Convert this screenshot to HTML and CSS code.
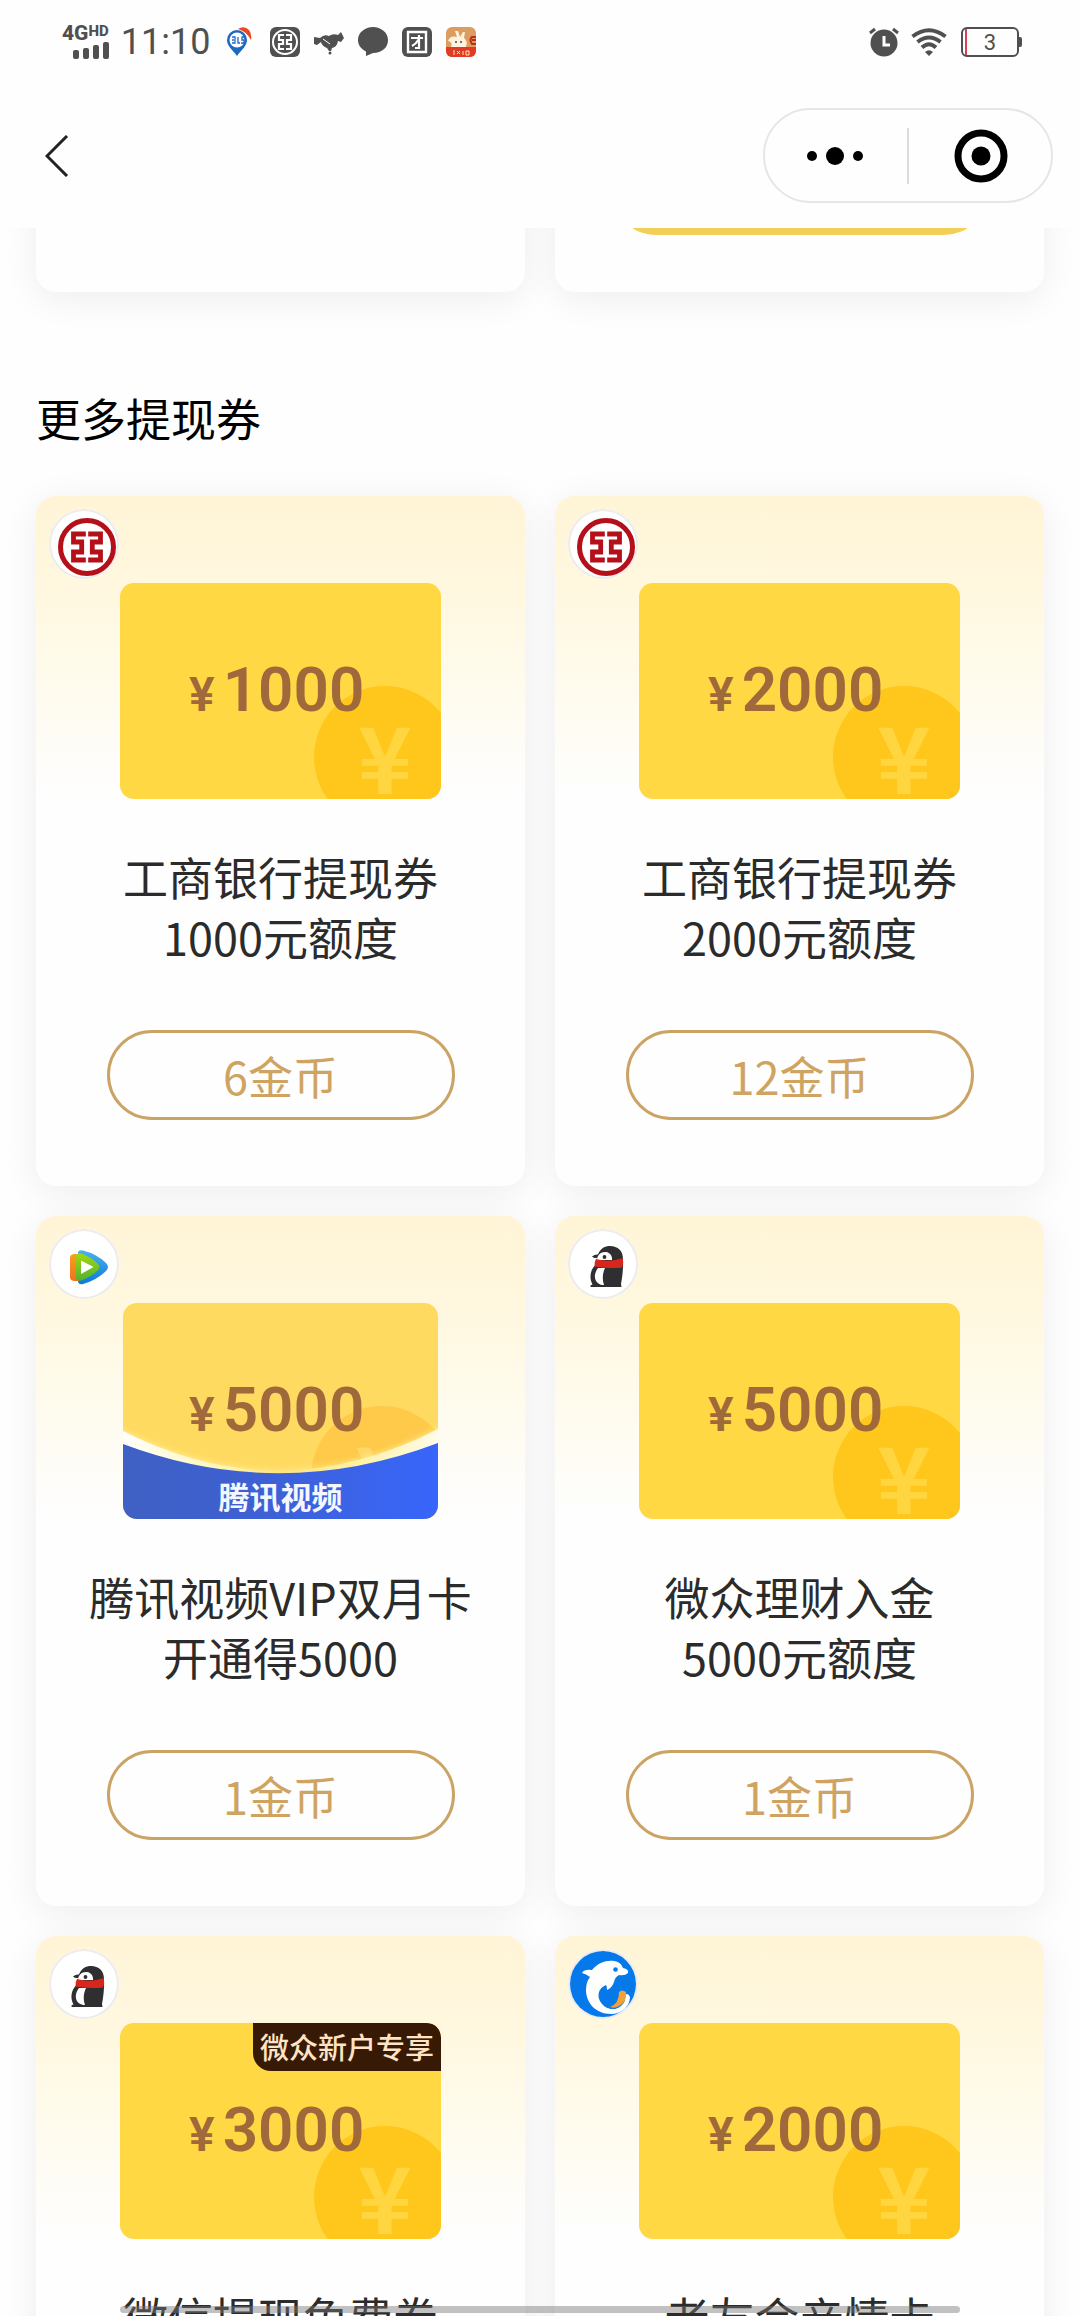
FILE: index.html
```html
<!DOCTYPE html>
<html lang="zh-CN">
<head>
    <meta charset="UTF-8">
    <meta name="viewport" content="width=device-width, initial-scale=1">
    <title>更多提现券</title>
    <link rel="stylesheet" href="styles.css">
</head>
<body>
    <svg class="sprite" aria-hidden="true">
        <symbol id="icbc" viewBox="0 0 70 70">
            <circle cx="38" cy="38" r="26.500" fill="none" stroke="#b5101a" stroke-width="5"/>
            <path d="M36.800 25H24.500V33h8.200v10h-8.200v8h12.300M39.200 25h12.300V33h-8.200v10h8.200v8H39.200" fill="none" stroke="#b5101a" stroke-width="4.800"/>
        </symbol>
        <symbol id="penguin" viewBox="0 0 70 70">
            <path d="M24 27.500Q27 25 30 25.500C32 19.500 37 17 42 17C50 17 55 22 55 30C55.500 40 54 50 53 55L53.500 58H23Q21 56.500 24.500 55.500C21 49 22 41 27.500 36L29 29Q26 29.500 24 27.500Z" fill="#2f2f31"/>
            <path d="M29 31C29 26 33 22.500 38 23C42 23.500 44.500 27 44 31Z" fill="#fff"/>
            <circle cx="36.500" cy="28" r="1.900" fill="#2f2f31"/>
            <path d="M28 30Q42 34 54.500 29Q56 34 54 38.500Q42 40 26.500 37.500Q26 33 28 30Z" fill="#d8261c"/>
            <path d="M30 39H37C34.500 44 34 50 36 56C27 56 24 47 30 39Z" fill="#fff"/>
        </symbol>
    </svg>

    <header class="header">
        <div class="statusbar">
            <div class="status-group">
                <div class="signal">
                    <span class="network">4G<small>HD</small></span>
                    <svg class="bars" viewBox="0 0 36 17">
                        <rect x="0" y="8" width="6" height="9" rx="2"/>
                        <rect x="10" y="6" width="6" height="11" rx="2"/>
                        <rect x="20" y="3" width="6" height="14" rx="2"/>
                        <rect x="30" y="0" width="6" height="17" rx="2"/>
                    </svg>
                </div>
                <time class="clock">11:10</time>
                <div class="notices">
                    <svg viewBox="0 0 30 30">
                        <path d="M11 29C6 22 1 19 1 13a10 10 0 0 1 20 0c0 6-5 9-10 16z" fill="#1f68c1"/>
                        <circle cx="11" cy="13" r="7.500" fill="#fff"/>
                        <path d="M6 10h3v6H6M8 13H6M12 10v6h2M18 10h-2v3h2v3h-3" fill="none" stroke="#1f68c1" stroke-width="1.300"/>
                        <path d="M12 2Q18-2 23 3Q26 7 25 13Q20 4 12 2z" fill="#e8481f"/>
                    </svg>
                    <svg viewBox="0 0 30 30">
                        <rect width="30" height="30" rx="6" fill="#505050"/>
                        <circle cx="15" cy="15" r="12" fill="none" stroke="#fff" stroke-width="2"/>
                        <path d="M14 8H9v5h4v4H9v5h5M16 8h5v5h-4v4h4v5h-5" fill="none" stroke="#fff" stroke-width="2.200"/>
                    </svg>
                    <svg viewBox="0 0 30 30">
                        <path d="M0 10L6 11Q10 7 15 9Q19 6 24 8L27 5L30 11L27 15L24 14Q23 20 18 21L17 24H15L13 21Q8 19 7 15L3 18L0 17Z" fill="#505050"/>
                        <path d="M9 12l7 5" stroke="#fff" stroke-width="1"/>
                        <circle cx="16" cy="26" r="1.500" fill="#505050"/>
                    </svg>
                    <svg viewBox="0 0 30 30">
                        <path d="M15 0c8 0 15 5.500 15 13s-6 13-15 13l-7 3v-4.500C3 22 0 18 0 13C0 5.500 7 0 15 0z" fill="#505050"/>
                    </svg>
                    <svg viewBox="0 0 30 30">
                        <rect width="30" height="30" rx="6" fill="#505050"/>
                        <path d="M6 5h18v20H6z" fill="none" stroke="#fff" stroke-width="2.400"/>
                        <path d="M9 11h12M17 8v13h-4M17 12q-3 5-7 7" fill="none" stroke="#fff" stroke-width="2.200"/>
                    </svg>
                    <svg viewBox="0 0 30 30">
                        <rect width="30" height="30" rx="6" fill="#dd9d60"/>
                        <path d="M0 20h30v4a6 6 0 0 1-6 6H6a6 6 0 0 1-6-6z" fill="#e23b24"/>
                        <path d="M2 14Q4 8 11 10L9 4h3l2 6l3-5h2l-1 6q4 3 2 9H5Q7 15 2 14z" fill="#fff2df"/>
                        <circle cx="10" cy="15" r="1" fill="#444"/>
                        <circle cx="15" cy="15" r="1" fill="#444"/>
                        <path d="M30 10h-4q-3 3 0 7h4M26 13h4" fill="none" stroke="#b7301c" stroke-width="2"/>
                        <path d="M8 23v5M11 24l3 3M14 24l-3 3M17 24v4M20 24h3v4h-3z" stroke="#ffe3c2" fill="none"/>
                    </svg>
                </div>
            </div>
            <div class="status-group">
                <svg class="alarm" viewBox="0 0 30 30">
                    <circle cx="15" cy="16" r="13.500"/>
                    <path d="M1 6l5-4M29 6l-5-4" stroke="#505050" stroke-width="3"/>
                    <path d="M15 9v9h6" fill="none" stroke="#fff" stroke-width="3"/>
                </svg>
                <svg class="wifi" viewBox="0 0 36 28">
                    <g fill="none" stroke="#505050" stroke-width="4">
                        <path d="M1.500 8.500Q18-4 34.500 8.500"/>
                        <path d="M6.500 14Q18 5 29.500 14"/>
                        <path d="M11 19.500Q18 13 25 19.500"/>
                    </g>
                    <path d="M14 24q4-3.500 8 0l-4 4z"/>
                </svg>
                <div class="battery">3</div>
            </div>
        </div>
        <nav class="navbar">
            <button class="back" aria-label="返回">
                <svg viewBox="0 0 24 42"><path d="M22 1L2 21l20 20" fill="none" stroke="#222" stroke-width="3"/></svg>
            </button>
            <div class="capsule">
                <button class="capsule-btn" aria-label="更多">
                    <svg class="dots" viewBox="0 0 56 18">
                        <circle cx="5" cy="9" r="5"/>
                        <circle cx="28" cy="9" r="9"/>
                        <circle cx="51" cy="9" r="5"/>
                    </svg>
                </button>
                <button class="capsule-btn" aria-label="关闭">
                    <svg class="ring" viewBox="0 0 54 54">
                        <circle cx="27" cy="27" r="23" fill="none" stroke="#000" stroke-width="7"/>
                        <circle cx="27" cy="27" r="9.500"/>
                    </svg>
                </button>
            </div>
        </nav>
    </header>

    <main class="content">
        <!-- 上一行卡片，滚到顶栏下面 -->
        <div class="grid passed">
            <div class="card"></div>
            <div class="card"><button class="buy filled" aria-label="兑换"></button></div>
        </div>

        <h2 class="heading">更多提现券</h2>

        <div class="grid">
            <article class="card">
                <span class="badge"><svg><use href="#icbc"/></svg></span>
                <div class="coupon">
                    <span class="coin">¥</span>
                    <p class="amount"><small>¥</small>1000</p>
                </div>
                <h3 class="title">工商银行提现券<br>1000元额度</h3>
                <button class="buy">6金币</button>
            </article>

            <article class="card">
                <span class="badge"><svg><use href="#icbc"/></svg></span>
                <div class="coupon">
                    <span class="coin">¥</span>
                    <p class="amount"><small>¥</small>2000</p>
                </div>
                <h3 class="title">工商银行提现券<br>2000元额度</h3>
                <button class="buy">12金币</button>
            </article>

            <article class="card">
                <span class="badge">
                    <svg viewBox="0 0 70 70">
                        <defs>
                            <linearGradient id="tvBlue" x2="0" y2="1"><stop stop-color="#49b4ea"/><stop offset="1" stop-color="#0f78d8"/></linearGradient>
                            <linearGradient id="tvOrange" x2="0" y2="1"><stop stop-color="#f5a31c"/><stop offset="1" stop-color="#f26f21"/></linearGradient>
                            <linearGradient id="tvGreen" x2="0" y2="1"><stop stop-color="#a4d80e"/><stop offset="1" stop-color="#4fb32e"/></linearGradient>
                        </defs>
                        <path d="M29 23Q30 20.500 34 21.500Q48 25 57 34Q61 38 57 42Q48 51 34 55Q30 56 29 53Z" fill="url(#tvBlue)"/>
                        <path d="M21 29Q21 25 26 25H30V52H26Q21 52 21 48Z" fill="url(#tvOrange)"/>
                        <path d="M27 27Q28 23.500 32 24.500Q42 28 49 35Q52 38 49 41Q42 48 32 51.500Q28 52.500 27 49Z" fill="url(#tvGreen)"/>
                        <path d="M32 31.500L44.500 38L32 45Z" fill="#fff"/>
                    </svg>
                </span>
                <div class="coupon video">
                    <span class="coin">¥</span>
                    <svg class="wave" viewBox="0 0 315 216" preserveAspectRatio="none">
                        <defs>
                            <linearGradient id="waveBlue"><stop stop-color="#3f60c4"/><stop offset=".4" stop-color="#3e60d2"/><stop offset="1" stop-color="#3866fb"/></linearGradient>
                            <linearGradient id="waveGlow"><stop stop-color="#fff"/><stop offset=".3" stop-color="#fff6b8"/><stop offset=".5" stop-color="#ffe27a"/><stop offset=".75" stop-color="#fff2a8"/><stop offset="1" stop-color="#fffbe8"/></linearGradient>
                            <filter id="soft" x="-10%" y="-20%" width="120%" height="140%"><feGaussianBlur stdDeviation="3"/></filter>
                        </defs>
                        <path d="M-8 124Q157 212 323 122V145Q157 195-8 145Z" fill="#fff19a" filter="url(#soft)"/>
                        <path d="M0 128Q157 208 315 126V145Q157 200 0 145Z" fill="url(#waveGlow)"/>
                        <path d="M0 141Q157 200 315 140V216H0Z" fill="url(#waveBlue)"/>
                    </svg>
                    <p class="amount"><small>¥</small>5000</p>
                    <span class="brand">腾讯视频</span>
                </div>
                <h3 class="title">腾讯视频VIP双月卡<br>开通得5000</h3>
                <button class="buy">1金币</button>
            </article>

            <article class="card">
                <span class="badge"><svg><use href="#penguin"/></svg></span>
                <div class="coupon">
                    <span class="coin">¥</span>
                    <p class="amount"><small>¥</small>5000</p>
                </div>
                <h3 class="title">微众理财入金<br>5000元额度</h3>
                <button class="buy">1金币</button>
            </article>

            <article class="card">
                <span class="badge"><svg><use href="#penguin"/></svg></span>
                <div class="coupon">
                    <span class="coin">¥</span>
                    <p class="amount"><small>¥</small>3000</p>
                    <span class="tag">微众新户专享</span>
                </div>
                <h3 class="title">微信提现免费券</h3>
            </article>

            <article class="card">
                <span class="badge">
                    <svg viewBox="0 0 70 70">
                        <circle cx="35" cy="35" r="33" fill="#0679ea"/>
                        <path d="M14 24Q16 20 24 21C30 14 38 11 46 12Q53 13 55 19Q61 20 60 24Q57 27 51 26Q47 28 46 33Q44 39 39 41Q39 37 38 36C30 39 28 48 34 55C40 62 50 61 55 55Q58 51 57 46Q60 43 62 48C62 57 54 65 43 65C28 65 18 54 18 41Q18 33 22 28Q18 25 14 24Z" fill="#fff"/>
                        <path d="M35 42Q32 50 38 58Q47 63 54 56Q49 60 43 58Q36 54 35 42Z" fill="#0679ea"/>
                        <path d="M51 43Q54 40 58 43Q59 53 51 57Q47 60 42 58Q51 55 51 43Z" fill="#f0a13a"/>
                        <circle cx="47.500" cy="20.500" r="2.300" fill="#0679ea"/>
                    </svg>
                </span>
                <div class="coupon">
                    <span class="coin">¥</span>
                    <p class="amount"><small>¥</small>2000</p>
                </div>
                <h3 class="title">老友会亲情卡</h3>
            </article>
        </div>
    </main>

    <div class="home-indicator"></div>
</body>
</html>
```
FILE: styles.css
```css
* {
    box-sizing: border-box;
}

body {
    margin: 0;
    height: 100vh;
    overflow: hidden;
    background: #fefefe;
    color: #2b2b2b;
    font-family: "Noto Sans CJK SC", sans-serif;
}

button {
    padding: 0;
    border: none;
    background: none;
    font-family: inherit;
    cursor: pointer;
}

svg {
    display: block;
}

.sprite {
    position: absolute;
    width: 0;
    height: 0;
}

/* header */

.header {
    position: relative;
    z-index: 1;
    background: #fefefe;
}

.statusbar {
    display: flex;
    justify-content: space-between;
    align-items: center;
    height: 84px;
    padding: 0 57px 0 62px;
    color: #505050;
    font-family: Roboto, sans-serif;
}

.statusbar svg {
    fill: #505050;
}

.status-group {
    display: flex;
    align-items: center;
    gap: 12px;
}

.signal {
    display: flex;
    flex-direction: column;
    align-items: flex-end;
    gap: 1px;
}

.network {
    display: flex;
    align-items: flex-start;
    font-size: 21px;
    font-weight: 800;
    line-height: 16px;
}

    .network small {
        font-size: 15px;
        line-height: 12px;
    }

.bars {
    width: 36px;
    height: 17px;
}

.clock {
    font-size: 36px;
    line-height: 40px;
}

.notices {
    display: flex;
    gap: 14px;
    margin-left: 4px;
}

    .notices svg {
        width: 30px;
        height: 30px;
    }

.alarm {
    width: 30px;
    height: 30px;
}

.wifi {
    width: 36px;
    height: 28px;
}

.battery {
    position: relative;
    width: 58px;
    height: 30px;
    margin: 0 4px 0 2px;
    border: 2px solid #505050;
    border-radius: 6px;
    background: linear-gradient(90deg, transparent 2px, #d8405a 2px, #d8405a 4px, transparent 4px);
    font-size: 22px;
    line-height: 27px;
    text-align: center;
}

    .battery::after {
        content: "";
        position: absolute;
        top: 8px;
        right: -5px;
        width: 3px;
        height: 10px;
        border-radius: 0 2px 2px 0;
        background: #505050;
    }

.navbar {
    display: flex;
    justify-content: space-between;
    align-items: center;
    padding: 24px 27px 25px 45px;
}

.back svg {
    width: 24px;
    height: 42px;
}

.capsule {
    display: flex;
    align-items: center;
    width: 290px;
    height: 95px;
    border: 2px solid #e6e6e6;
    border-radius: 48px;
}

.capsule-btn {
    display: flex;
    flex: 1;
    justify-content: center;
    align-items: center;
    height: 56px;
    padding-right: 2px;
}

    .capsule-btn + .capsule-btn {
        padding: 0 0 0 3px;
        border-left: 2px solid #dcdcdc;
    }

.dots {
    width: 56px;
    height: 18px;
}

.ring {
    width: 54px;
    height: 54px;
}

/* cards */

.content {
    padding: 0 36px;
}

.grid {
    display: grid;
    grid-template-columns: repeat(2, 1fr);
    gap: 30px;
}

.card {
    position: relative;
    display: flex;
    flex-direction: column;
    align-items: center;
    padding: 87px 0 66px;
    border-radius: 20px;
    background: #fefefe linear-gradient(#fff4d6, #fff8e0 100px, #fefefe 300px);
    box-shadow: 0 6px 36px rgba(0, 0, 0, 0.07);
}

.passed {
    margin-top: -100px;
}

    .passed .card {
        justify-content: flex-end;
        height: 164px;
        padding: 0 0 57px;
        background: #fefefe;
    }

.heading {
    margin: 94px 0 46px;
    color: #000;
    font-size: 45px;
    font-weight: 400;
    line-height: 64px;
}

.badge {
    position: absolute;
    top: 13px;
    left: 13px;
    width: 70px;
    height: 70px;
    border-radius: 50%;
    background: #fff;
    box-shadow: inset 0 0 0 2px #ececec;
}

    .badge svg {
        width: 70px;
        height: 70px;
    }

.coupon {
    position: relative;
    width: 321px;
    height: 216px;
    padding: 70px 0 0 69px;
    border-radius: 14px;
    background: #ffd843;
    overflow: hidden;
}

.coin {
    position: absolute;
    right: -15px;
    bottom: -29px;
    width: 142px;
    height: 142px;
    border-radius: 50%;
    background: #ffc61c;
    color: #ffd640;
    font-size: 92px;
    font-weight: 700;
    line-height: 136px;
    text-align: center;
}

.amount {
    position: relative;
    display: flex;
    align-items: baseline;
    gap: 8px;
    margin: 0;
    color: #9f693c;
    font-family: Roboto, sans-serif;
    font-size: 62px;
    font-weight: 600;
    line-height: 74px;
}

    .amount small {
        font-size: 48px;
    }

.video {
    width: 315px;
    padding-left: 66px;
    background: #ffda61;
}

    .video .coin {
        background: #ffca4a;
        color: #ffd869;
    }

.wave {
    position: absolute;
    inset: 0;
    width: 100%;
    height: 100%;
}

.brand {
    position: absolute;
    right: 0;
    bottom: 0;
    left: 0;
    color: #f4f7ff;
    font-size: 31px;
    font-weight: 700;
    line-height: 46px;
    text-align: center;
}

.tag {
    position: absolute;
    top: 0;
    right: 0;
    padding: 0 7px 2px;
    border-radius: 0 14px 0 18px;
    background: #371a05;
    color: #ffe3c4;
    font-size: 29px;
    font-weight: 500;
    line-height: 46px;
}

.title {
    margin: 48px 0 63px;
    font-size: 45px;
    font-weight: 400;
    line-height: 60px;
    text-align: center;
}

.buy {
    width: 348px;
    height: 90px;
    padding-top: 2px;
    border: 3px solid #cba465;
    border-radius: 45px;
    color: #cfa462;
    font-size: 45px;
    line-height: 82px;
}

.filled {
    width: 378px;
    border: none;
    background: #f4cf57;
}

.home-indicator {
    position: fixed;
    right: 120px;
    bottom: 3px;
    left: 120px;
    height: 7px;
    border-radius: 4px;
    background: rgba(120, 120, 120, 0.45);
}
```
